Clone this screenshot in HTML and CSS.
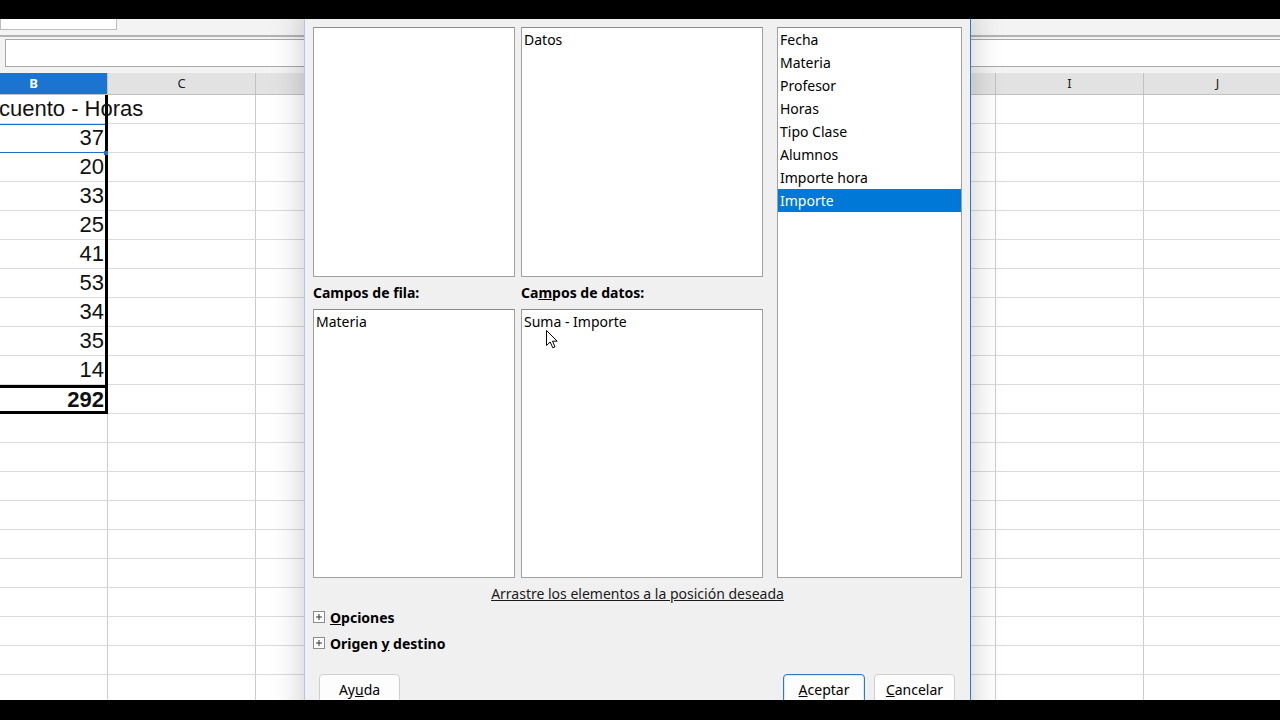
FILE: index.html
```html
<!DOCTYPE html>
<html lang="es">
<head>
    <meta charset="UTF-8">
    <title>Tabla dinámica - Diseño</title>
    <link rel="stylesheet" href="styles.css">
</head>
<body>
    <div class="bar top"></div>
    <div class="screen">
        <!-- hoja de cálculo de fondo -->
        <div class="toolbar">
            <div class="namerow"><div class="namebox"></div></div>
            <div class="formularow"><div class="formula"></div></div>
        </div>
        <div class="headers">
            <div class="hd sel">B</div>
            <div class="hd">C</div>
            <div class="hd">D</div>
            <div class="hd">E</div>
            <div class="hd">F</div>
            <div class="hd">G</div>
            <div class="hd">H</div>
            <div class="hd">I</div>
            <div class="hd">J</div>
        </div>
        <div class="cells">
            <div class="colB">
                <div class="block">
                    <div class="cell title">cuento - Horas</div>
                    <div class="cell cur">37</div>
                    <div class="cell">20</div>
                    <div class="cell">33</div>
                    <div class="cell">25</div>
                    <div class="cell">41</div>
                    <div class="cell">53</div>
                    <div class="cell">34</div>
                    <div class="cell">35</div>
                    <div class="cell">14</div>
                    <div class="cell total">292</div>
                </div>
            </div>
        </div>

        <!-- diálogo de diseño de la tabla dinámica -->
        <div class="dialog">
            <div class="layout">
                <div class="box"></div>
                <div class="box"><div class="item">Datos</div></div>
                <div class="box list">
                    <div class="item">Fecha</div>
                    <div class="item">Materia</div>
                    <div class="item">Profesor</div>
                    <div class="item">Horas</div>
                    <div class="item">Tipo Clase</div>
                    <div class="item">Alumnos</div>
                    <div class="item">Importe hora</div>
                    <div class="item sel">Importe</div>
                </div>
                <div class="label">Campos de fila:</div>
                <div class="label">Ca<u>m</u>pos de datos:</div>
                <div class="box"><div class="item">Materia</div></div>
                <div class="box"><div class="item">Suma - Importe</div></div>
            </div>

            <div class="hint">Arrastre los elementos a la posición deseada</div>

            <div class="expander">
                <svg class="plus" width="12" height="12" viewBox="0 0 12 12"><rect x="0.5" y="0.5" width="11" height="11" fill="#fff" stroke="#8c8c8c"/><path d="M3 6h6M6 3v6" stroke="#333" stroke-width="1"/></svg>
                <span><u>O</u>pciones</span>
            </div>
            <div class="expander">
                <svg class="plus" width="12" height="12" viewBox="0 0 12 12"><rect x="0.5" y="0.5" width="11" height="11" fill="#fff" stroke="#8c8c8c"/><path d="M3 6h6M6 3v6" stroke="#333" stroke-width="1"/></svg>
                <span>Origen <u>y</u> destino</span>
            </div>

            <div class="buttons">
                <button class="btn">Ay<u>u</u>da</button>
                <div class="spacer"></div>
                <button class="btn default"><u>A</u>ceptar</button>
                <button class="btn"><u>C</u>ancelar</button>
            </div>

            <svg class="cursor" width="12" height="19" viewBox="0 0 12 19"><path d="M0.5 0.5V15.5L4.2 12L6.8 17.8L9 16.8L6.5 11.2H11.2Z" fill="#fff" stroke="#000" stroke-width="1" stroke-linejoin="round"/></svg>
        </div>
    </div>
    <div class="bar bottom"></div>
</body>
</html>
```

FILE: styles.css
```css
* { box-sizing: border-box; }
body {
    margin: 0;
    width: 1280px;
    height: 720px;
    overflow: hidden;
    background: #000;
}
.bar { background: #000; }
.bar.top { height: 19px; }
.bar.bottom { height: 20px; }
.screen {
    position: relative;
    height: 681px;
    overflow: hidden;
    background: #fff;
}

/* barra de fórmulas */
.toolbar {
    height: 54px;
    background: #f3f3f3;
}
.namerow {
    height: 18px;
    border-bottom: 2px solid #b3b3b3;
}
.namebox {
    width: 117px;
    height: 11px;
    background: #fff;
    border: 1px solid #bdbdbd;
    border-top: 0;
}
.formularow {
    height: 36px;
    padding: 2px 0 0 5px;
}
.formula {
    height: 28px;
    background: #fff;
    border: 1px solid #a8a8a8;
    margin-right: -2px;
}

/* cabeceras de columna */
.headers {
    display: flex;
    height: 22px;
    margin-left: -40px;
}
.hd {
    flex: 0 0 148px;
    background: #e2e2e2;
    border-right: 1px solid #c2c2c2;
    border-bottom: 1px solid #c2c2c2;
    text-align: center;
    font: 13px "Noto Sans", sans-serif;
    line-height: 21px;
    color: #222;
}
.hd.sel {
    background: #1b74d0;
    color: #fff;
    font-weight: bold;
}

/* celdas */
.cells {
    display: flex;
    height: 605px;
    margin-left: -40px;
    background-image:
        linear-gradient(to bottom, transparent 28px, #dadada 28px),
        linear-gradient(to right, transparent 147px, #cccccc 147px);
    background-size: 100% 29px, 148px 100%;
}
.colB {
    flex: none;
    width: 148px;
    min-width: 0;
}
.block { border-right: 3px solid #000; }
.cell {
    height: 29px;
    padding-right: 1px;
    font: 22px "Liberation Sans", Arial, sans-serif;
    line-height: 28px;
    text-align: right;
    color: #111;
}
.cell.title {
    text-align: left;
    white-space: nowrap;
    padding-left: 39px;
    overflow: visible;
}
.cell.cur {
    position: relative;
    box-shadow: inset 0 1px 0 #1f6fc5, inset 0 -1px 0 #1f6fc5;
}
.cell.cur::after {
    content: "";
    position: absolute;
    right: -3px;
    bottom: -2px;
    width: 4px;
    height: 4px;
    background: #1f6fc5;
}
.cell.total {
    font-weight: bold;
    border-top: 3px solid #000;
    border-bottom: 3px solid #000;
    line-height: 23px;
}

/* diálogo */
.dialog {
    position: absolute;
    left: 304px;
    top: -12px;
    bottom: -40px;
    width: 667px;
    padding: 20px 8px 0;
    background: #f0f0f0;
    border-left: 1px solid #a9c9e6;
    border-right: 1px solid #2a7bc4;
    box-shadow: 0 0 30px rgba(0,0,0,0.22);
    font: 14px "Noto Sans", sans-serif;
    color: #000;
}
.layout {
    display: grid;
    grid-template-columns: 202px 242px 193px;
    grid-template-rows: 250px 32px 269px;
    column-gap: 6px;
}
.box {
    background: #fff;
    border: 1px solid #a0a0a0;
    border-top-color: #8a8a8a;
}
.list {
    grid-column: 3;
    grid-row: 1 / 4;
    margin-left: 8px;
}
.item {
    height: 23px;
    line-height: 23px;
    padding-left: 2px;
    white-space: nowrap;
}
.item.sel {
    background: #0078d7;
    color: #fff;
}
.label {
    align-self: center;
    font-weight: bold;
    margin-top: -2px;
}
.hint {
    margin-top: 6px;
    line-height: 20px;
    text-align: center;
    text-decoration: underline;
    color: #1a1a1a;
}
.expander {
    display: flex;
    align-items: center;
    gap: 5px;
    height: 26px;
    font-weight: bold;
}
.plus { flex: 0 0 12px; }
.buttons {
    display: flex;
    gap: 9px;
    margin-top: 18px;
    padding: 0 7px 0 6px;
}
.spacer { flex: 1; }
.btn {
    width: 81px;
    height: 30px;
    padding: 0;
    background: #fdfdfd;
    border: 1px solid #d0d0d0;
    border-radius: 4px;
    font: 14px "Noto Sans", sans-serif;
    color: #000;
}
.btn.default {
    width: 82px;
    border-color: #2b79c4;
    box-shadow: inset 0 0 0 1px #d8e8f7;
}
.cursor {
    position: absolute;
    left: 241px;
    top: 323px;
}
```
